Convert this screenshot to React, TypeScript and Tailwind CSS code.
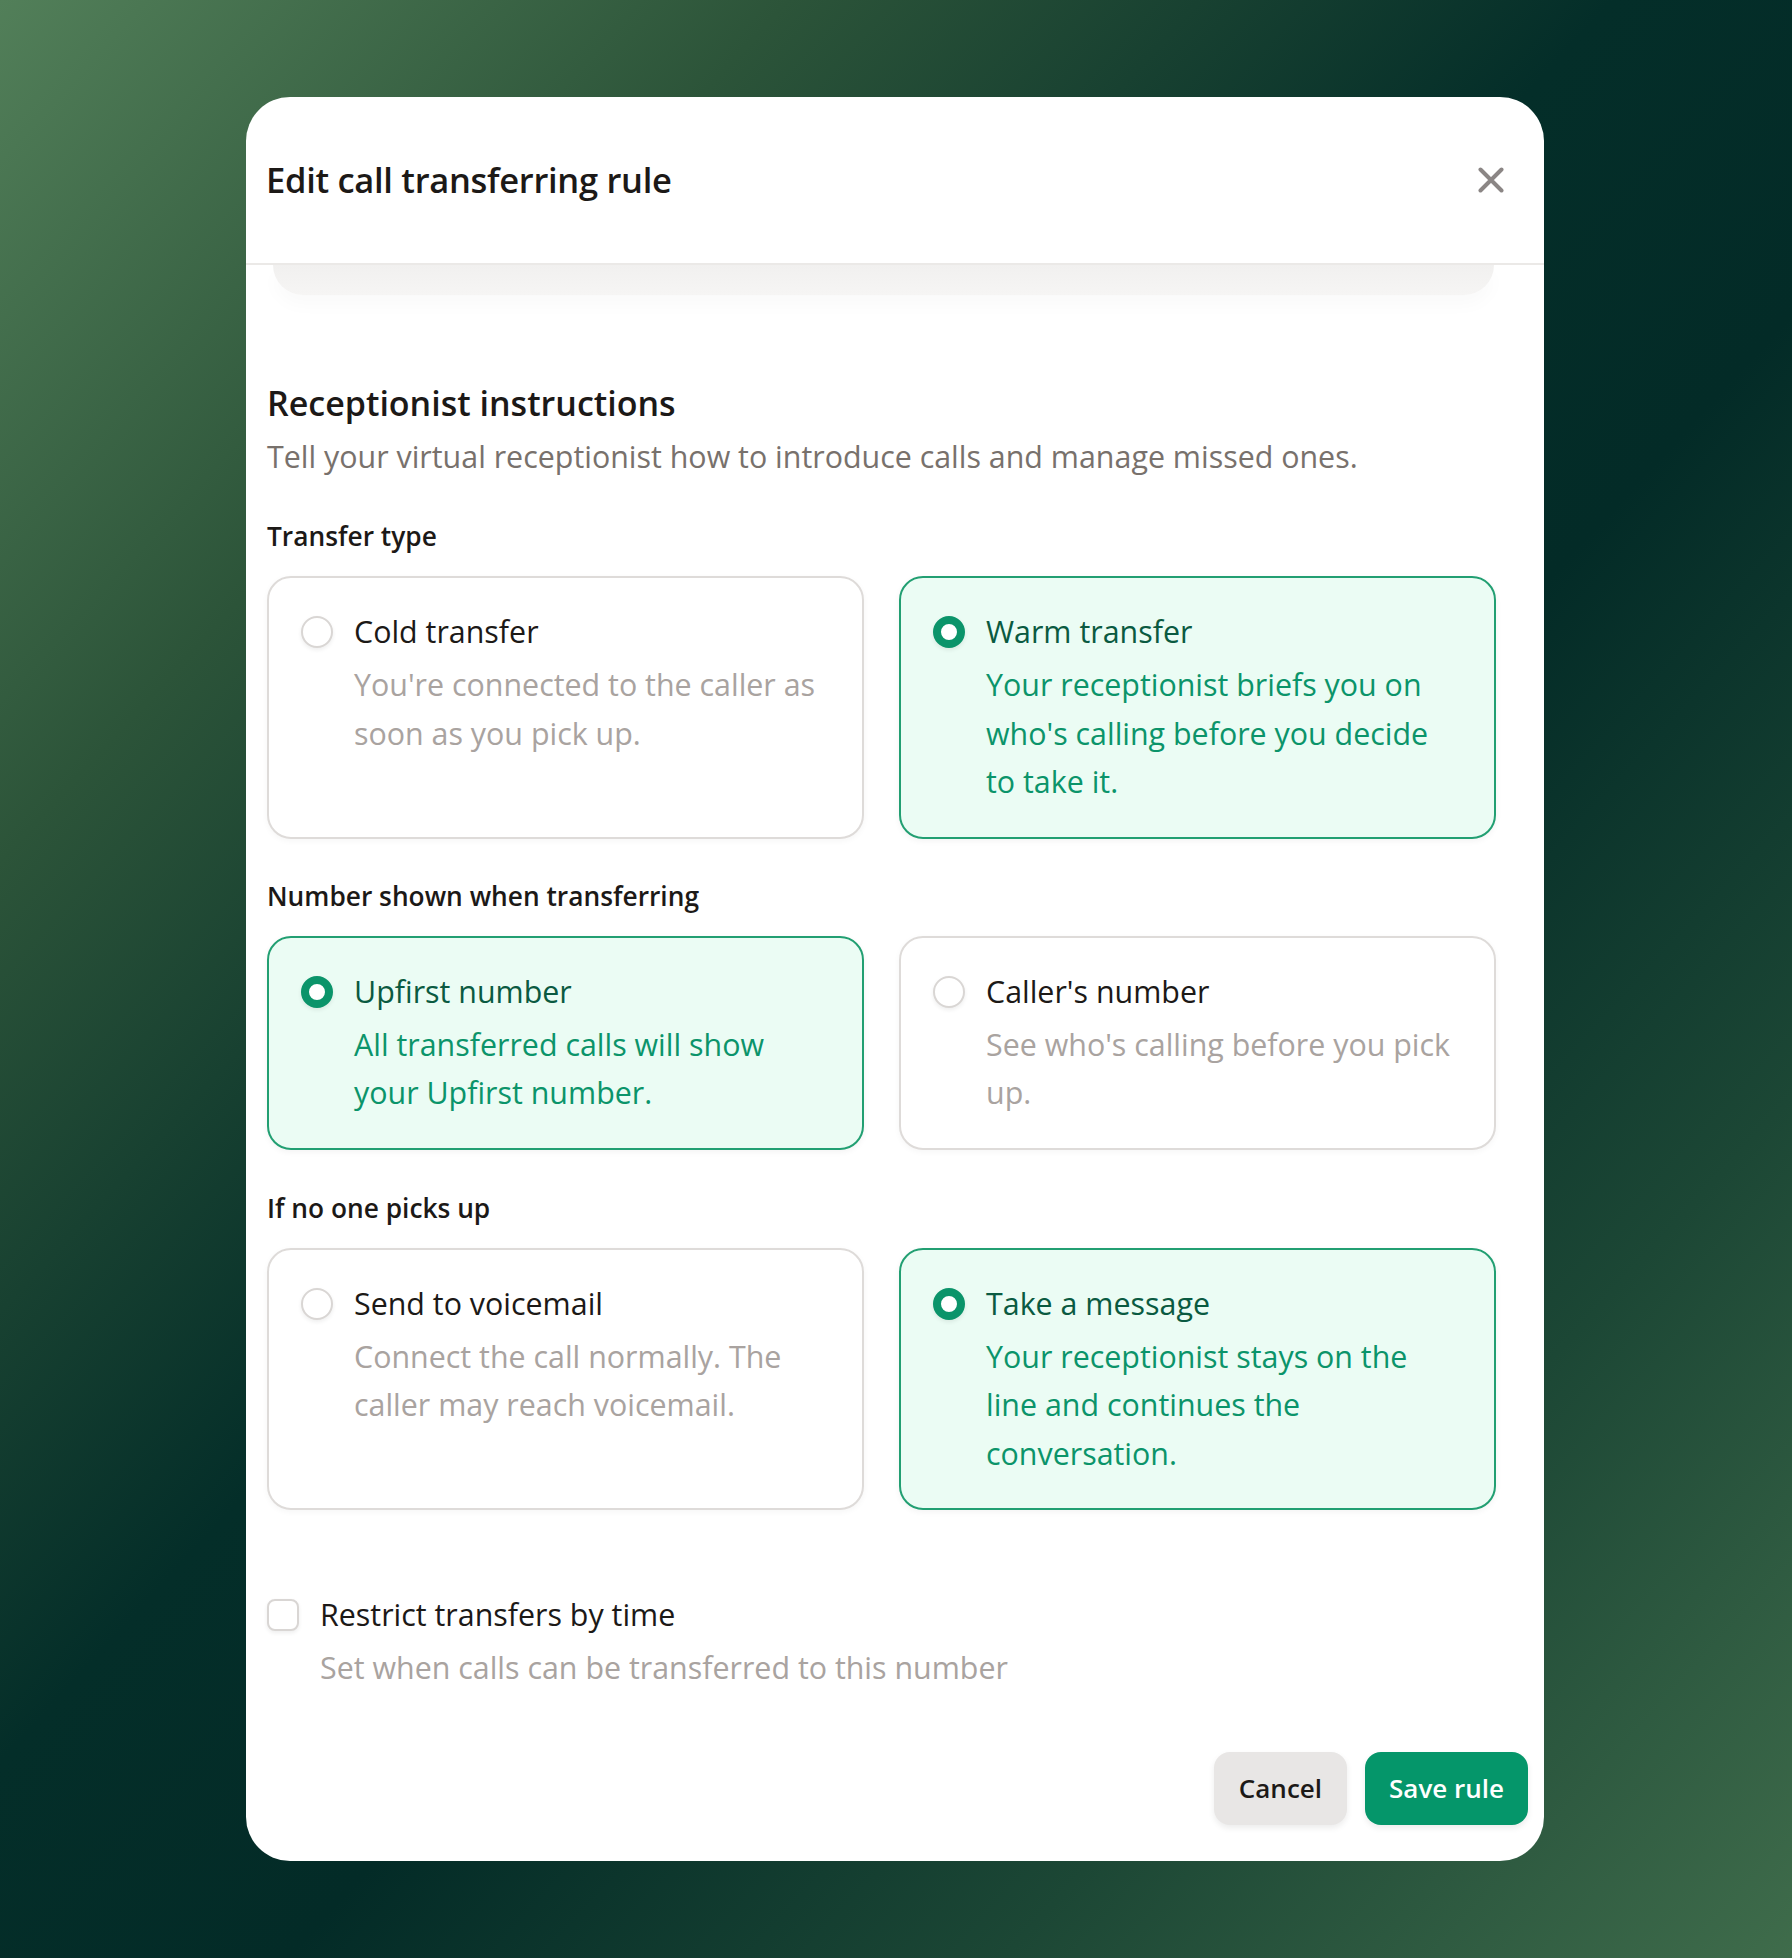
import React from "react";

type Opt = {
  title: string;
  lines: string[];
  selected: boolean;
};

const groups: { label: string; options: Opt[] }[] = [
  {
    label: "Transfer type",
    options: [
      {
        title: "Cold transfer",
        lines: ["You're connected to the caller as", "soon as you pick up."],
        selected: false,
      },
      {
        title: "Warm transfer",
        lines: [
          "Your receptionist briefs you on",
          "who's calling before you decide",
          "to take it.",
        ],
        selected: true,
      },
    ],
  },
  {
    label: "Number shown when transferring",
    options: [
      {
        title: "Upfirst number",
        lines: ["All transferred calls will show", "your Upfirst number."],
        selected: true,
      },
      {
        title: "Caller's number",
        lines: ["See who's calling before you pick", "up."],
        selected: false,
      },
    ],
  },
  {
    label: "If no one picks up",
    options: [
      {
        title: "Send to voicemail",
        lines: ["Connect the call normally. The", "caller may reach voicemail."],
        selected: false,
      },
      {
        title: "Take a message",
        lines: [
          "Your receptionist stays on the",
          "line and continues the",
          "conversation.",
        ],
        selected: true,
      },
    ],
  },
];

function Radio({ selected }: { selected: boolean }) {
  return selected ? (
    <div className="mt-[8px] h-[32px] w-[32px] shrink-0 rounded-full border-[8px] border-[#0b946a] bg-white shadow-[0_2px_4px_rgba(0,0,0,0.08)]" />
  ) : (
    <div className="mt-[8px] h-[32px] w-[32px] shrink-0 rounded-full border-2 border-[#d9d6d4] bg-white shadow-[0_2px_4px_rgba(0,0,0,0.07)]" />
  );
}

function OptionCard({ opt }: { opt: Opt }) {
  return (
    <div
      className={
        opt.selected
          ? "flex gap-[21px] rounded-[24px] border-2 border-[#229f72] bg-[#ebfcf4] pl-[32px] pr-[20px] py-[30px] shadow-[0_2px_6px_rgba(0,0,0,0.05)]"
          : "flex gap-[21px] rounded-[24px] border-2 border-[#dedbd9] bg-white pl-[32px] pr-[20px] py-[30px] shadow-[0_2px_6px_rgba(0,0,0,0.04)]"
      }
    >
      <Radio selected={opt.selected} />
      <div className="flex flex-col">
        <div
          className={
            opt.selected
              ? "text-[30.4px] leading-[48px] text-[#0a5a41]"
              : "text-[30.4px] leading-[48px] text-[#1c1917]"
          }
        >
          {opt.title}
        </div>
        <div
          className={
            opt.selected
              ? "mt-[5px] text-[30.4px] leading-[48.5px] text-[#0b946a]"
              : "mt-[5px] text-[30.4px] leading-[48.5px] text-[#a9a3a0]"
          }
        >
          {opt.lines.map((l, i) => (
            <div key={i} className="whitespace-nowrap">
              {l}
            </div>
          ))}
        </div>
      </div>
    </div>
  );
}

export default function App() {
  return (
    <div
      className="min-h-[1958px] w-full bg-[linear-gradient(to_bottom_right,#527f59_0%,#2c5439_22%,#042e29_45%,#032b27_58%,#1c4735_78%,#3f6c4b_100%)] pt-[97px]"
      style={{ fontFamily: '"Open Sans", "Noto Sans", sans-serif' }}
    >
      <div className="ml-[246px] flex w-[1298px] flex-col overflow-hidden rounded-[44px] bg-white">
        {/* Header */}
        <div className="flex h-[168px] items-center justify-between border-b-2 border-[#ebe9e7] pl-[20px] pr-[40px]">
          <h1 className="text-[34.5px] font-semibold tracking-[-0.3px] text-[#1c1917]">
            Edit call transferring rule
          </h1>
          <svg width="26" height="26" viewBox="0 0 26 26" fill="none">
            <path
              d="M2.5 2.5 L23.5 23.5 M23.5 2.5 L2.5 23.5"
              stroke="#8b8685"
              strokeWidth="4"
              strokeLinecap="round"
            />
          </svg>
        </div>

        {/* Scrolled-under card shadow */}
        <div className="pl-[27px] pr-[50px]">
          <div className="h-[30px] rounded-b-[34px] bg-[linear-gradient(to_bottom,#f1f0ef,#f6f5f4)] shadow-[0_10px_18px_rgba(0,0,0,0.025)]" />
        </div>

        {/* Body */}
        <div className="flex flex-col pl-[21px] pr-[48px] pt-[86px]">
          <h2 className="text-[34px] font-semibold leading-[44px] text-[#1c1917]">
            Receptionist instructions
          </h2>
          <p className="mt-[10px] text-[30.4px] leading-[44px] text-[#78716c]">
            Tell your virtual receptionist how to introduce calls and manage missed ones.
          </p>

          {groups.map((g, gi) => (
            <div key={g.label} className={gi === 2 ? "mt-[38px]" : "mt-[37px]"}>
              <div className="text-[26.3px] font-semibold leading-[40px] text-[#1c1917]">
                {g.label}
              </div>
              <div className="mt-[20px] grid grid-cols-2 gap-x-[35px]">
                {g.options.map((o) => (
                  <OptionCard key={o.title} opt={o} />
                ))}
              </div>
            </div>
          ))}

          {/* Restrict by time */}
          <div className="mt-[81px] flex gap-[21px]">
            <div className="mt-[8px] h-[32px] w-[32px] shrink-0 rounded-[8px] border-2 border-[#d9d6d4] bg-white shadow-[0_2px_4px_rgba(0,0,0,0.07)]" />
            <div className="flex flex-col">
              <div className="text-[30.4px] leading-[48px] text-[#1c1917]">
                Restrict transfers by time
              </div>
              <div className="mt-[5px] text-[30.4px] leading-[48px] text-[#a9a3a0]">
                Set when calls can be transferred to this number
              </div>
            </div>
          </div>
        </div>

        {/* Footer */}
        <div className="mt-[60px] flex justify-end gap-[18px] pb-[36px] pr-[16px]">
          <button className="h-[73px] rounded-[16px] bg-[#e8e6e5] px-[25px] text-[26px] font-semibold text-[#1c1917] shadow-[0_3px_6px_rgba(0,0,0,0.08)]">
            Cancel
          </button>
          <button className="h-[73px] rounded-[16px] bg-[#05966a] px-[24px] text-[26px] font-semibold text-white shadow-[0_3px_6px_rgba(0,0,0,0.08)]">
            Save rule
          </button>
        </div>
      </div>
    </div>
  );
}
